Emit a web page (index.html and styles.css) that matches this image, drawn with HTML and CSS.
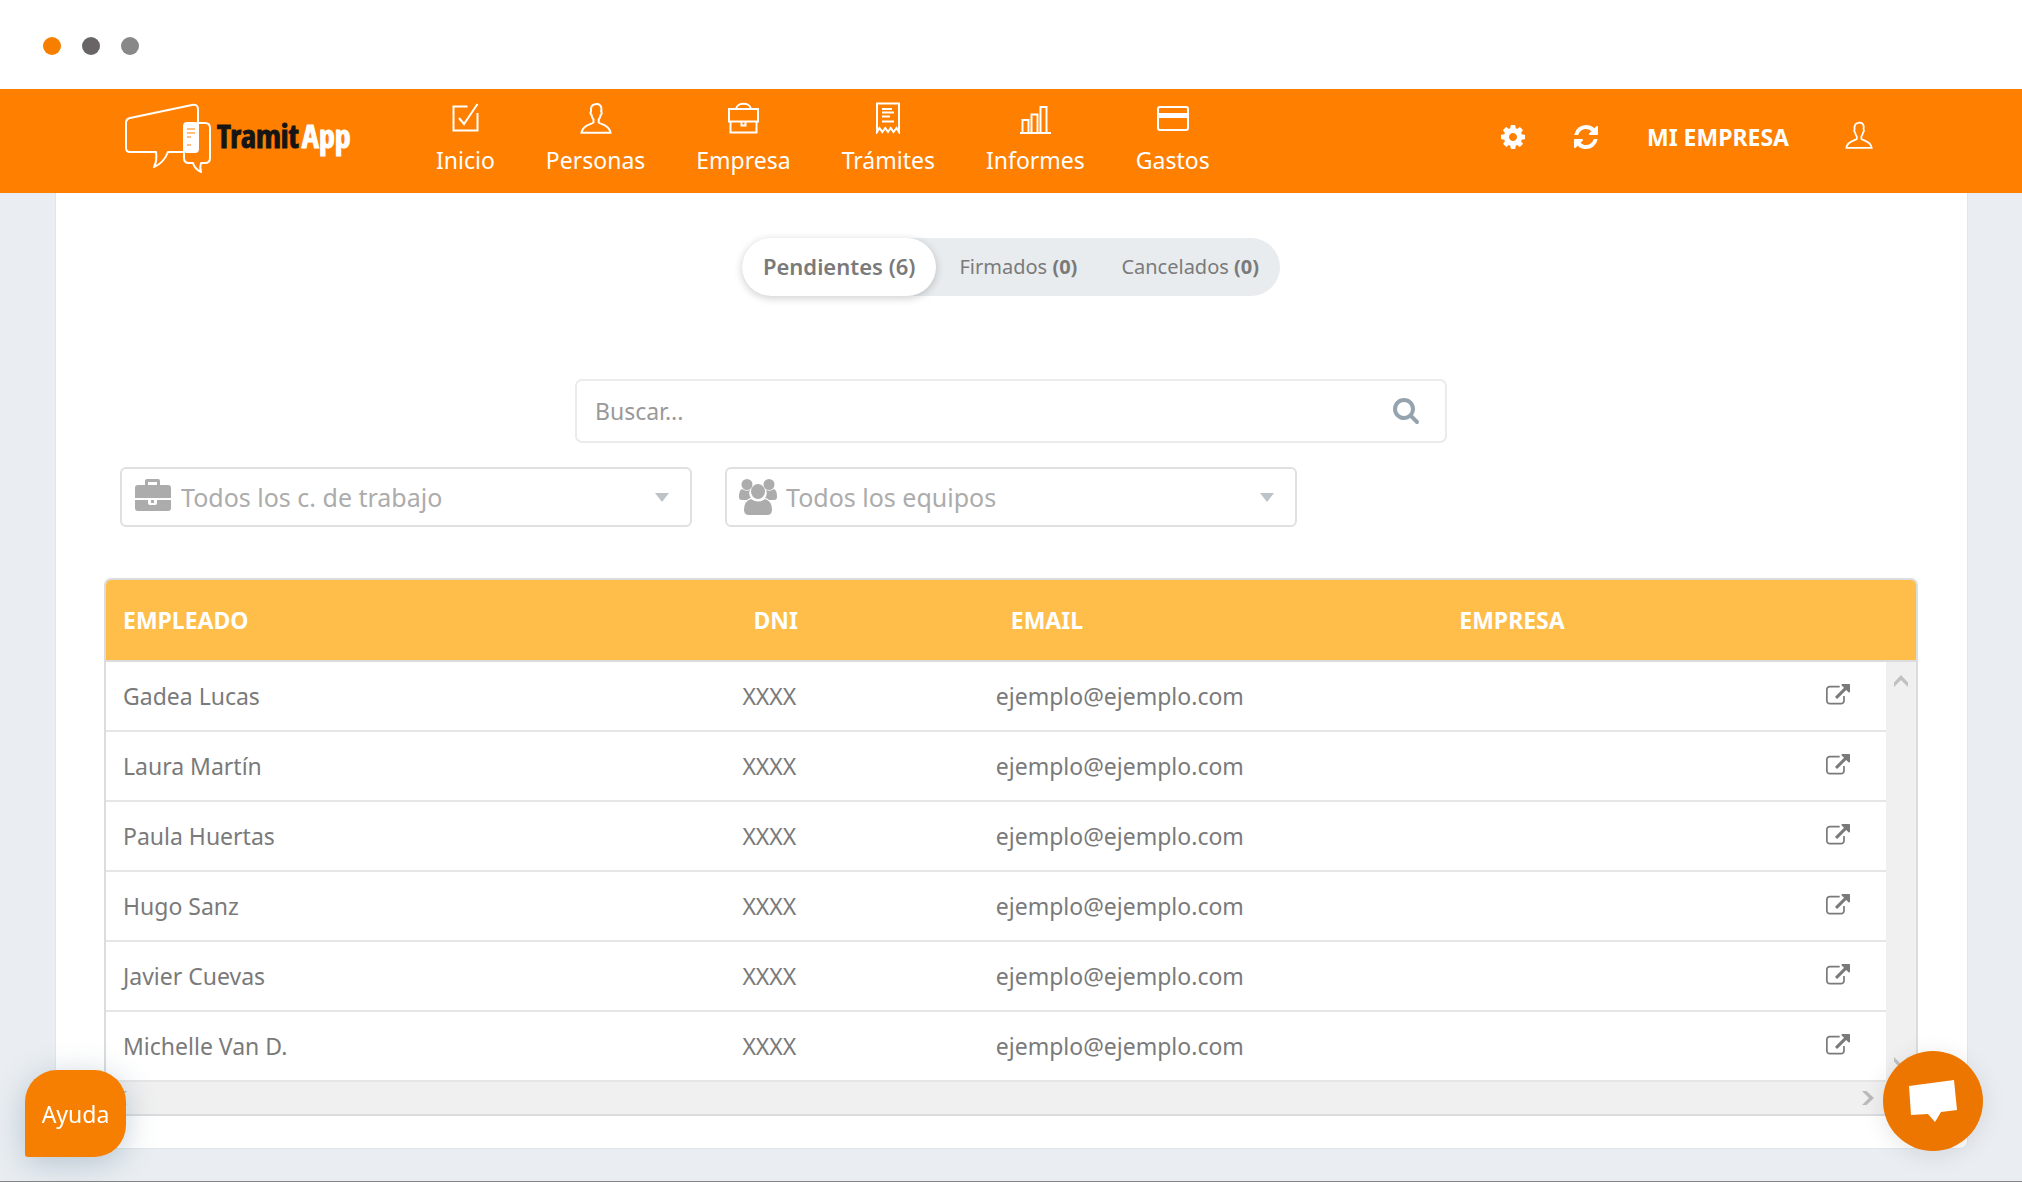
FILE: index.html
```html
<!DOCTYPE html>
<html lang="es">
<head>
<meta charset="utf-8">
<meta name="viewport" content="width=device-width, initial-scale=1">
<title>TramitApp</title>
<link rel="stylesheet" href="styles.css">
</head>
<body>
<svg class="sprite" aria-hidden="true">
  <symbol id="user" viewBox="0 0 32 32"><path d="M13.500 20.500v-3c-1-1-1.700-2.500-1.900-4.300c-1.200-.7-1.400-3-.6-3.600c-.6-4.600 1-7.100 4.200-7.400c3.500-1 7.200 1 6 7.400c.8.600.6 2.900-.6 3.600c-.2 1.800-.9 3.300-1.900 4.300v3c1.300 1.700 11 2.200 11.800 10.300h-29c.8-8.100 10.700-8.600 12-10.300z" fill="none" stroke="currentColor" stroke-width="2"/></symbol>
  <symbol id="open" viewBox="0 0 1792 1792"><path fill="currentColor" d="M1408 928v320q0 119-84.500 203.500t-203.500 84.500h-832q-119 0-203.500-84.500t-84.500-203.500v-832q0-119 84.500-203.500t203.500-84.500h704q14 0 23 9t9 23v64q0 14-9 23t-23 9h-704q-66 0-113 47t-47 113v832q0 66 47 113t113 47h832q66 0 113-47t47-113v-320q0-14 9-23t23-9h64q14 0 23 9t9 23zm384-864v512q0 26-19 45t-45 19-45-19l-176-176-652 652q-10 10-23 10t-23-10l-114-114q-10-10-10-23t10-23l652-652-176-176q-19-19-19-45t19-45 45-19h512q26 0 45 19t19 45z"/></symbol>
  <symbol id="caret" viewBox="0 0 14 9"><path d="M0 0h14L7 9z" fill="currentColor"/></symbol>
  <symbol id="chevron" viewBox="0 0 14 14"><path d="M0 8.500L7 1l7 7.500V13L7 6 0 13z" fill="currentColor"/></symbol>
</svg>

<div class="window-bar"><span class="dot dot-orange"></span><span class="dot dot-dark"></span><span class="dot dot-gray"></span></div>

<header class="navbar">
  <a class="logo" href="#" aria-label="TramitApp">
    <svg class="logo-mark" viewBox="0 0 88 72" aria-hidden="true">
      <g fill="none" stroke="#fff" stroke-width="2" stroke-linejoin="round">
        <path d="M59 49H44c-3 8-7 12-14 15c2-4 3-9 2-15H6q-4 0-4-4V20q0-4 4-5L68 2q6-1 6 4v16"/>
        <path d="M74 20h7q5 0 5 5v30q0 5-5 5h-4c-1 3-1 6 0 9c-4-2-7-5-8-9h-4q-5 0-5-5V25"/>
      </g>
      <rect x="59" y="19" width="16" height="31" rx="4" fill="#fff"/>
      <path d="M63 26h8M63 30h8M63 34h4M63 42h4" stroke="#ff7f00"/>
    </svg>
    <span class="logo-name"><span class="logo-dark">Tramit</span><span>App</span></span>
  </a>
  <nav class="menu" aria-label="Principal">
    <a href="#"><svg viewBox="0 0 32 32"><g fill="none" stroke="currentColor" stroke-width="2"><path d="M18.500 4.500H4.500v24h24V11"/><path d="M10 16l5 6L28.500 2"/></g></svg>Inicio</a>
    <a href="#"><svg><use href="#user"/></svg>Personas</a>
    <a href="#"><svg viewBox="0 0 32 32"><path d="M2 7h29v12.500H2zM3.500 19.500V30.500h26V19.500M9 7c1-7 14-7 15 0M14.500 19.500v4h4v-4" fill="none" stroke="currentColor" stroke-width="2"/></svg>Empresa</a>
    <a href="#"><svg viewBox="0 0 32 32"><path d="M5 30V1.500h22V30l-2.500-4-3 4-2.800-4-2.700 4-2.700-4-3 4-2.800-4zM10 7h10M10 10.500h12M10 14.500h8M10 19.500h12" fill="none" stroke="currentColor" stroke-width="2"/></svg>Trámites</a>
    <a href="#"><svg viewBox="0 0 32 32"><path d="M1 31h31M3.500 30V18h6v12M12.500 30V12.500h6V30M21.500 30V5h6v25" fill="none" stroke="currentColor" stroke-width="2"/></svg>Informes</a>
    <a href="#"><svg viewBox="0 0 32 32"><rect x="1" y="5" width="30" height="23" rx="2" fill="none" stroke="currentColor" stroke-width="2"/><path d="M1 13.500h30" stroke="currentColor" stroke-width="5"/></svg>Gastos</a>
  </nav>
  <div class="account">
    <button type="button" aria-label="Ajustes"><svg viewBox="128 128 1536 1536"><path fill="currentColor" d="M1152 896q0-106-75-181t-181-75-181 75-75 181 75 181 181 75 181-75 75-181zm512-109v222q0 12-8 23t-20 13l-185 28q-19 54-39 91 35 50 107 138 10 12 10 25t-9 23q-27 37-99 108t-94 71q-12 0-26-9l-138-108q-44 23-91 38-16 136-29 186-7 28-36 28h-222q-14 0-24.500-8.500t-11.500-21.500l-28-184q-49-16-90-37l-141 107q-10 9-25 9-14 0-25-11-126-114-165-168-7-10-7-23 0-12 8-23 15-21 51-66.500t54-70.500q-27-50-41-99l-183-27q-13-2-21-12.500t-8-23.500v-222q0-12 8-23t19-13l186-28q14-46 39-92-40-57-107-138-10-12-10-24 0-10 9-23 26-36 98.500-107.500t94.500-71.500q13 0 26 10l138 107q44-23 91-38 16-136 29-186 7-28 36-28h222q14 0 24.500 8.500t11.500 21.500l28 184q49 16 90 37l142-107q9-9 24-9 13 0 25 10 129 119 165 170 7 8 7 22 0 12-8 23-15 21-51 66.500t-54 70.500q26 50 41 98l183 28q13 2 21 12.500t8 23.500z"/></svg></button>
    <button type="button" aria-label="Actualizar"><svg viewBox="128 128 1536 1536"><path fill="currentColor" d="M1639 1056q0 5-1 7-64 268-268 434.500t-478 166.500q-146 0-282.500-55t-243.500-157l-129 129q-19 19-45 19t-45-19-19-45v-448q0-26 19-45t45-19h448q26 0 45 19t19 45-19 45l-137 137q71 66 161 102t187 36q134 0 250-65t186-179q11-17 53-117 8-23 30-23h192q13 0 22.500 9.500t9.500 22.500zm25-800v448q0 26-19 45t-45 19h-448q-26 0-45-19t-19-45 19-45l138-138q-148-137-349-137-134 0-250 65t-186 179q-11 17-53 117-8 23-30 23h-199q-13 0-22.500-9.500t-9.500-22.500v-7q65-268 270-434.500t480-166.500q146 0 284 55.500t245 156.500l130-129q19-19 45-19t45 19 19 45z"/></svg></button>
    <a href="#">MI EMPRESA</a>
    <button type="button" aria-label="Perfil"><svg class="profile"><use href="#user"/></svg></button>
  </div>
</header>

<main class="panel">
  <div class="tabs" role="tablist">
    <button type="button" role="tab" aria-selected="true" class="active">Pendientes (6)</button>
    <button type="button" role="tab" aria-selected="false">Firmados <b>(0)</b></button>
    <button type="button" role="tab" aria-selected="false">Cancelados <b>(0)</b></button>
  </div>

  <form class="search" role="search">
    <input type="text" placeholder="Buscar..." aria-label="Buscar">
    <button type="button" aria-label="Buscar"><svg viewBox="64 128 1664 1664"><path fill="currentColor" d="M1216 832q0-185-131.500-316.500t-316.500-131.500-316.500 131.500-131.500 316.500 131.500 316.500 316.500 131.500 316.500-131.500 131.500-316.500zm512 832q0 52-38 90t-90 38q-54 0-90-38l-343-342q-179 124-399 124-143 0-273.500-55.500t-225-150-150-225-55.500-273.500 55.500-273.500 150-225 225-150 273.500-55.500 273.500 55.500 225 150 150 225 55.500 273.500q0 220-124 399l343 343q37 37 37 90z"/></svg></button>
  </form>

  <div class="filters">
    <div class="filter">
      <svg class="filter-icon" viewBox="0 0 38 38" aria-hidden="true"><g fill="currentColor"><path d="M11 7V3q0-2 2-2h11q2 0 2 2v4h8q3 0 3 3v10H1V10q0-3 3-3zM14 4v3h9V4z" fill-rule="evenodd"/><path d="M1 22h13v3q0 2 2 2h5q2 0 2-2v-3h14v8q0 3-3 3H4q-3 0-3-3zM17 22h3v3h-3z"/></g></svg>
      <select aria-label="Centro de trabajo"><option>Todos los c. de trabajo</option></select>
      <svg class="caret" aria-hidden="true"><use href="#caret"/></svg>
    </div>
    <div class="filter">
      <svg class="filter-icon" viewBox="0 0 38 38" aria-hidden="true"><g fill="currentColor"><ellipse cx="8" cy="6.500" rx="5.500" ry="5.500"/><ellipse cx="30" cy="6.500" rx="5.500" ry="5.500"/><path d="M3 11q4 3 8 1q-2 4 1 8q-2 0-4 2H3q-3 0-3-3q0-7 3-8zM35 11q-4 3-8 1q2 4-1 8q2 0 4 2h5q3 0 3-3q0-7-3-8z"/><ellipse cx="19" cy="13.500" rx="7" ry="7.500"/><path d="M12 21q7 5 14 0q7 2 7 11q0 5-5 5H10q-5 0-5-5q0-9 7-11z"/></g></svg>
      <select aria-label="Equipo"><option>Todos los equipos</option></select>
      <svg class="caret" aria-hidden="true"><use href="#caret"/></svg>
    </div>
  </div>

  <section class="grid-box" aria-label="Empleados">
    <table>
      <colgroup><col class="c-name"><col class="c-dni"><col class="c-email"><col class="c-company"><col><col class="c-scroll"></colgroup>
      <thead>
        <tr><th>EMPLEADO</th><th>DNI</th><th class="h-email">EMAIL</th><th>EMPRESA</th><th colspan="2"></th></tr>
      </thead>
      <tbody>
        <tr><td>Gadea Lucas</td><td>XXXX</td><td>ejemplo@ejemplo.com</td><td></td><td class="action"><a href="#" aria-label="Abrir Gadea Lucas"><svg><use href="#open"/></svg></a></td>
          <td class="v-scroll" rowspan="6" aria-hidden="true"><div class="v-track"><svg><use href="#chevron"/></svg><svg class="down"><use href="#chevron"/></svg></div></td></tr>
        <tr><td>Laura Martín</td><td>XXXX</td><td>ejemplo@ejemplo.com</td><td></td><td class="action"><a href="#" aria-label="Abrir Laura Martín"><svg><use href="#open"/></svg></a></td></tr>
        <tr><td>Paula Huertas</td><td>XXXX</td><td>ejemplo@ejemplo.com</td><td></td><td class="action"><a href="#" aria-label="Abrir Paula Huertas"><svg><use href="#open"/></svg></a></td></tr>
        <tr><td>Hugo Sanz</td><td>XXXX</td><td>ejemplo@ejemplo.com</td><td></td><td class="action"><a href="#" aria-label="Abrir Hugo Sanz"><svg><use href="#open"/></svg></a></td></tr>
        <tr><td>Javier Cuevas</td><td>XXXX</td><td>ejemplo@ejemplo.com</td><td></td><td class="action"><a href="#" aria-label="Abrir Javier Cuevas"><svg><use href="#open"/></svg></a></td></tr>
        <tr><td>Michelle Van D.</td><td>XXXX</td><td>ejemplo@ejemplo.com</td><td></td><td class="action"><a href="#" aria-label="Abrir Michelle Van D."><svg><use href="#open"/></svg></a></td></tr>
      </tbody>
    </table>
    <div class="h-track" aria-hidden="true"><svg class="left"><use href="#chevron"/></svg><svg class="right"><use href="#chevron"/></svg></div>
  </section>
</main>

<button type="button" class="help">Ayuda</button>
<button type="button" class="chat" aria-label="Chat"><svg viewBox="0 0 50 44"><path d="M1 7L46 1l3 30-16 2-6 10-7-8-17 1z" fill="#fff"/></svg></button>
</body>
</html>
```

FILE: styles.css
```css
* { box-sizing: border-box; }

body {
  margin: 0;
  min-height: 100vh;
  padding-bottom: 32px;
  border-bottom: 1px solid #858585;
  background: #eaeef2;
  color: #7a7a7a;
  font: 23px/32px "Noto Sans", "Open Sans", sans-serif;
}

a { color: inherit; text-decoration: none; }
svg { display: block; }
.sprite { position: absolute; width: 0; height: 0; }

button, input, select {
  margin: 0;
  padding: 0;
  border: 0;
  background: none;
  color: inherit;
  font: inherit;
}
button { cursor: pointer; }

/* Window bar */
.window-bar {
  display: flex;
  align-items: center;
  gap: 21px;
  height: 89px;
  padding: 2px 43px 0;
  background: #fff;
}
.dot { width: 18px; height: 18px; border-radius: 50%; }
.dot-orange { background: #f77f00; }
.dot-dark { background: #696566; }
.dot-gray { background: #888; }

/* Navigation */
.navbar {
  display: flex;
  align-items: center;
  height: 104px;
  padding: 0 149px 4px 124px;
  background: #ff7f00;
  color: #fff;
}
.logo { display: flex; align-items: center; gap: 5px; width: 312px; }
.logo-mark { width: 88px; height: 72px; }
.logo-name {
  display: flex;
  gap: 3px;
  padding-bottom: 6px;
  font: bold 32px/40px "Liberation Sans Narrow", "Open Sans Condensed", "Roboto Condensed", sans-serif;
  -webkit-text-stroke: 1px currentColor;
}
.logo-dark { color: #151515; }
.menu { display: flex; gap: 51px; }
.menu a { display: flex; flex-direction: column; align-items: center; gap: 10px; }
.menu svg { width: 32px; height: 32px; }
.account {
  display: flex;
  align-items: center;
  gap: 49px;
  margin-left: auto;
  padding-bottom: 4px;
  font-weight: 700;
}
.account svg { width: 24px; height: 24px; }
.account .profile { width: 28px; height: 28px; }
.account button:last-child { margin-left: 7px; padding-bottom: 4px; }

/* Content */
.panel {
  display: flex;
  flex-direction: column;
  margin: 0 54px 0 55px;
  padding: 45px 49px 32px 48px;
  border: solid #dfe6ea;
  border-width: 0 1px 1px;
  border-radius: 0 0 8px 8px;
  background: #fff;
}

.tabs {
  display: flex;
  align-self: center;
  border-radius: 29px;
  background: #e8ecef;
  font-size: 20px;
}
.tabs button { height: 58px; padding: 0 21px 0 23px; }
.tabs .active {
  padding: 0 21px 3px;
  border-radius: 29px;
  background: #fff;
  box-shadow: 0 2px 8px rgba(0, 0, 0, .2);
  font-size: 22px;
  font-weight: 600;
}

.search {
  display: flex;
  align-items: center;
  align-self: center;
  width: 872px;
  max-width: 100%;
  height: 64px;
  margin-top: 83px;
  padding: 0 26px 0 18px;
  border: 2px solid #ebebeb;
  border-radius: 7px;
}
.search input { flex: 1; outline: 0; }
.search input::placeholder { color: #999; opacity: 1; }
.search svg { width: 26px; height: 26px; color: #95a3af; }

.filters {
  display: grid;
  grid-template-columns: repeat(3, 1fr);
  gap: 33px;
  margin: 24px 16px 51px;
}
.filter {
  display: flex;
  align-items: center;
  gap: 9px;
  height: 60px;
  padding: 0 21px 0 12px;
  border: 2px solid #e0e0e0;
  border-radius: 6px;
  color: #acacac;
}
.filter select { flex: 1; appearance: none; outline: 0; font-size: 25px; }
.filter-icon { width: 38px; height: 38px; }
.caret { width: 14px; height: 9px; color: #bdc3c7; }

/* Employee table */
.grid-box {
  overflow: hidden;
  border: 2px solid #dadcde;
  border-radius: 7px 7px 0 0;
}
table { width: 100%; table-layout: fixed; border-collapse: separate; border-spacing: 0; }
.c-name { width: 34%; }
.c-dni { width: 14%; }
.c-email { width: 25%; }
.c-company { width: 14%; }
.c-scroll { width: 30px; }
th, td { padding: 0 0 0 17px; text-align: left; }
th {
  height: 82px;
  border-bottom: 2px solid #dcdcdc;
  background: #ffbd4a;
  color: #fff;
}
th + th { padding-left: 32px; }
.h-email { padding-left: 36px; }
td { height: 70px; border-bottom: 2px solid #e6e6e6; }
td + td { padding-left: 21px; }
.action a { display: flex; justify-content: flex-end; padding-right: 36px; }
.action svg { width: 24px; height: 24px; }
td.v-scroll { height: 420px; padding: 0; border: 0; background: #f0f0f0; color: #c1c1c1; }
.v-track {
  display: flex;
  flex-direction: column;
  justify-content: space-between;
  align-items: center;
  height: 420px;
  padding: 12px 0;
}
.v-track svg, .h-track svg { width: 14px; height: 14px; }
.down { transform: rotate(180deg); }
.h-track {
  display: flex;
  justify-content: space-between;
  align-items: center;
  height: 32px;
  padding: 0 41px 0 8px;
  background: #f0f0f0;
  color: #bbb;
}
.left { transform: rotate(-90deg); }
.right { transform: rotate(90deg); }

/* Floating buttons */
.help {
  position: fixed;
  left: 25px;
  bottom: 25px;
  width: 101px;
  height: 87px;
  border-radius: 32px 32px 32px 3px;
  background: #f67e00;
  box-shadow: 0 6px 32px rgba(60, 100, 130, .3);
  color: #fff;
}
.chat {
  position: fixed;
  right: 39px;
  bottom: 31px;
  display: grid;
  place-items: center;
  width: 100px;
  height: 100px;
  border-radius: 50%;
  background: #ec7600;
  box-shadow: 0 4px 24px rgba(0, 0, 0, .1);
}
.chat svg { width: 50px; height: 44px; }
```
